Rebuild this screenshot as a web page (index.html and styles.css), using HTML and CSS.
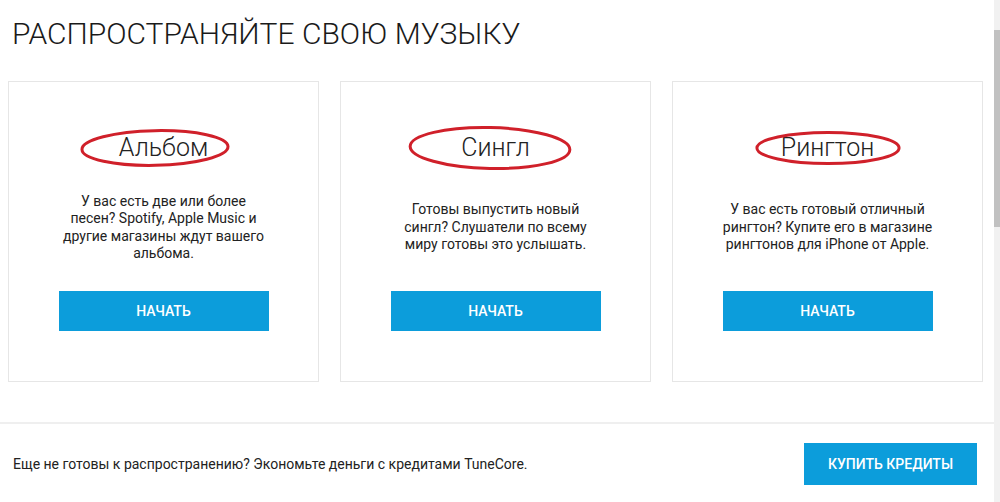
FILE: index.html
```html
<!DOCTYPE html>
<html lang="ru">
<head>
  <meta charset="UTF-8">
  <title>Распространяйте свою музыку</title>
  <link rel="stylesheet" href="styles.css">
</head>
<body>
  <div class="page">
    <main class="content">
      <h1 class="title">РАСПРОСТРАНЯЙТЕ СВОЮ МУЗЫКУ</h1>

      <div class="cards">
        <div class="card">
          <h2 class="card-title">
            <span class="mark">Альбом
              <svg class="circle circle-album" viewBox="0 0 152 36" preserveAspectRatio="none"><ellipse cx="76" cy="18" rx="74" ry="16" transform="rotate(-1 76 18)"/></svg>
            </span>
          </h2>
          <p class="card-text">У вас есть две или более песен? Spotify, Apple Music и другие магазины ждут вашего альбома.</p>
          <button class="btn">НАЧАТЬ</button>
        </div>

        <div class="card">
          <h2 class="card-title">
            <span class="mark">Сингл
              <svg class="circle circle-single" viewBox="0 0 152 36" preserveAspectRatio="none"><ellipse cx="76" cy="18" rx="74" ry="16" transform="rotate(1 76 18)"/></svg>
            </span>
          </h2>
          <p class="card-text">Готовы выпустить новый сингл? Слушатели по всему миру готовы это услышать.</p>
          <button class="btn">НАЧАТЬ</button>
        </div>

        <div class="card">
          <h2 class="card-title">
            <span class="mark">Рингтон
              <svg class="circle circle-ringtone" viewBox="0 0 152 36" preserveAspectRatio="none"><ellipse cx="76" cy="18" rx="74" ry="16"/></svg>
            </span>
          </h2>
          <p class="card-text">У вас есть готовый отличный рингтон? Купите его в магазине рингтонов для iPhone от Apple.</p>
          <button class="btn">НАЧАТЬ</button>
        </div>
      </div>

      <div class="credits">
        <p class="credits-text">Еще не готовы к распространению? Экономьте деньги с кредитами TuneCore.</p>
        <button class="btn btn-credits">КУПИТЬ КРЕДИТЫ</button>
      </div>
    </main>

    <div class="scrollbar"><div class="thumb"></div></div>
  </div>
</body>
</html>
```

FILE: styles.css
```css
* {
  box-sizing: border-box;
}
body {
  margin: 0;
  font-family: Roboto, "Liberation Sans", sans-serif;
  color: #222;
  background: #fff;
}
.page {
  display: flex;
  height: 502px;
  overflow: hidden;
}
.content {
  flex: 1;
}
.scrollbar {
  width: 6px;
  background: #f1f1f1;
  padding-top: 30px;
}
.thumb {
  height: 197px;
  background: #c1c1c1;
}
.title {
  margin: 0;
  padding: 15px 0 0 12px;
  font-size: 30px;
  font-weight: 300;
  line-height: 38px;
  color: #1a1a1a;
}
.cards {
  display: flex;
  gap: 21px;
  padding: 28px 0 0 8px;
}
.card {
  width: 311px;
  height: 301px;
  border: 1px solid #e6e6e6;
  display: flex;
  flex-direction: column;
  align-items: center;
  padding: 50px 0;
}
.card-title {
  margin: 0;
  font-size: 25px;
  font-weight: 300;
  line-height: 32px;
  color: #222;
}
.mark {
  position: relative;
  display: inline-block;
}
.circle {
  position: absolute;
  left: 50%;
  top: 50%;
  transform: translate(-50%, -50%);
  overflow: visible;
}
.circle ellipse {
  fill: none;
  stroke: #d0202a;
  stroke-width: 3;
  vector-effect: non-scaling-stroke;
}
.circle-album {
  width: 150px;
  height: 39px;
  margin-left: -9px;
}
.circle-single {
  width: 164px;
  height: 46px;
  margin-left: -5px;
}
.circle-ringtone {
  width: 146px;
  height: 35px;
}
.card-text {
  flex: 1;
  display: flex;
  align-items: center;
  justify-content: center;
  width: 212px;
  margin: 0;
  font-size: 14px;
  line-height: 17.5px;
  text-align: center;
  color: #222;
}
.btn {
  border: none;
  background: #0c9ddb;
  color: #fff;
  font-family: Roboto, "Liberation Sans", sans-serif;
  font-size: 14px;
  font-weight: 500;
  cursor: pointer;
}
.card .btn {
  width: 210px;
  height: 40px;
}
.credits {
  display: flex;
  align-items: center;
  justify-content: space-between;
  margin-top: 40px;
  border-top: 2px solid #efefef;
  padding: 19px 17px 0 13px;
}
.credits-text {
  margin: 0;
  font-size: 14px;
  color: #222;
}
.btn-credits {
  width: 173px;
  height: 42px;
}
```
